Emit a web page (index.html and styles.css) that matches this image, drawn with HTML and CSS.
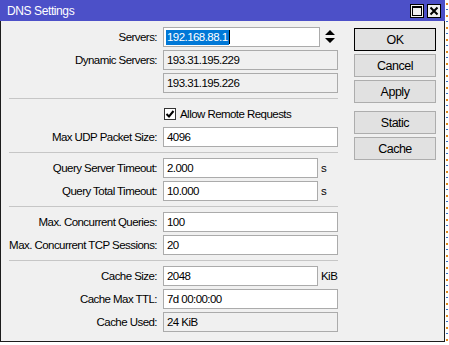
FILE: index.html
```html
<!DOCTYPE html>
<html lang="en">
<head>
<meta charset="UTF-8">
<meta name="viewport" content="width=device-width, initial-scale=1.0">
<title>DNS Settings</title>
<link rel="stylesheet" href="styles.css">
</head>
<body>

<div class="desk">
  <div class="window">
    <div class="titlebar">
      <span class="title">DNS Settings</span>
      <div class="title-buttons">
        <span class="tbtn">
          <svg width="12" height="12" viewBox="0 0 12 12"><rect x="1.5" y="1.5" width="9" height="9" fill="none" stroke="#000" stroke-width="1"/><rect x="1" y="1" width="10" height="2" fill="#000"/></svg>
        </span>
        <span class="tbtn">
          <svg width="12" height="12" viewBox="0 0 12 12"><path d="M2.5 2.5 L9.5 9.5 M9.5 2.5 L2.5 9.5" stroke="#000" stroke-width="2"/></svg>
        </span>
      </div>
    </div>

    <div class="content">
      <div class="form">
        <div class="section">
          <div class="row">
            <span class="label">Servers:</span>
            <div class="field servers"><span class="sel">192.168.88.1</span><span class="caret"></span></div>
            <span class="spin">
              <svg width="10" height="14" viewBox="0 0 10 14"><path d="M5 0 L10 5 L0 5 Z M0 8 L10 8 L5 13 Z" fill="#000"/></svg>
            </span>
          </div>
          <div class="row">
            <span class="label">Dynamic Servers:</span>
            <div class="field readonly">193.31.195.229</div>
          </div>
          <div class="row">
            <span class="label"></span>
            <div class="field readonly">193.31.195.226</div>
          </div>
        </div>
        <div class="sep"></div>

        <div class="section">
          <div class="row">
            <span class="label"></span>
            <span class="check">
              <svg width="10" height="10" viewBox="0 0 10 10"><path d="M1.5 5 L4 7.5 L8.5 2" fill="none" stroke="#000" stroke-width="2"/></svg>
            </span>
            <span class="check-text">Allow Remote Requests</span>
          </div>
          <div class="row">
            <span class="label">Max UDP Packet Size:</span>
            <div class="field">4096</div>
          </div>
        </div>
        <div class="sep"></div>

        <div class="section">
          <div class="row">
            <span class="label">Query Server Timeout:</span>
            <div class="field short">2.000</div>
            <span class="unit">s</span>
          </div>
          <div class="row">
            <span class="label">Query Total Timeout:</span>
            <div class="field short">10.000</div>
            <span class="unit">s</span>
          </div>
        </div>
        <div class="sep"></div>

        <div class="section">
          <div class="row">
            <span class="label">Max. Concurrent Queries:</span>
            <div class="field">100</div>
          </div>
          <div class="row">
            <span class="label">Max. Concurrent TCP Sessions:</span>
            <div class="field">20</div>
          </div>
        </div>
        <div class="sep"></div>

        <div class="section">
          <div class="row">
            <span class="label">Cache Size:</span>
            <div class="field short">2048</div>
            <span class="unit">KiB</span>
          </div>
          <div class="row">
            <span class="label">Cache Max TTL:</span>
            <div class="field">7d 00:00:00</div>
          </div>
          <div class="row">
            <span class="label">Cache Used:</span>
            <div class="field readonly">24 KiB</div>
          </div>
        </div>
      </div>

      <div class="buttons">
        <button class="btn default">OK</button>
        <button class="btn">Cancel</button>
        <button class="btn">Apply</button>
        <button class="btn spaced">Static</button>
        <button class="btn">Cache</button>
      </div>
    </div>
  </div>
  <div class="edge"></div>
</div>

</body>
</html>
```

FILE: styles.css
```css
body {
  margin: 0;
  background-color: #fff;
  font-family: "Liberation Sans", Arial, sans-serif;
  font-size: 11.5px;
  letter-spacing: -0.55px;
  color: #000;
}
.desk {
  display: flex;
}
.window {
  width: 445px;
  height: 342px;
  box-sizing: border-box;
  background-color: #f0f0f0;
  border: 1px solid #1c1c1c;
  border-top: none;
  display: flex;
  flex-direction: column;
}
.edge {
  width: 2px;
  height: 342px;
  margin-left: 1px;
  background: repeating-linear-gradient(to bottom, #fff 0, #fff 3px, #e08a20 3px, #e08a20 5px, #fff 5px, #fff 9px, #3a6fc0 9px, #3a6fc0 10px, #fff 10px, #fff 12px);
}
.titlebar {
  height: 21px;
  margin: 0 -1px;
  background-color: #4c50c8;
  display: flex;
  align-items: center;
  padding: 0 4px 0 7px;
}
.title {
  color: #fff;
  flex: 1;
  font-size: 12px;
  letter-spacing: -0.4px;
  padding-top: 1px;
}
.title-buttons {
  display: flex;
  gap: 3px;
}
.tbtn {
  width: 14px;
  height: 14px;
  box-sizing: border-box;
  border: 1px solid #000;
  background-color: #f0f0f0;
  display: flex;
  align-items: center;
  justify-content: center;
}
.content {
  display: flex;
  padding: 6px 8px 0 0;
}
.form {
  width: 337px;
}
.section {
  display: flex;
  flex-direction: column;
  gap: 3px;
}
.sep {
  height: 1px;
  margin: 5px 0 5px 8px;
  background-color: #c6c6c6;
}
.row {
  display: flex;
  align-items: center;
  height: 20px;
}
.label {
  width: 156px;
  text-align: right;
  margin-right: 6px;
  white-space: nowrap;
}
.field {
  width: 175px;
  height: 20px;
  box-sizing: border-box;
  border: 1px solid #ababab;
  background-color: #fff;
  padding: 0 3px;
  line-height: 18px;
  display: flex;
  align-items: center;
}
.field.readonly {
  background-color: #f0f0f0;
}
.field.short {
  width: 155px;
}
.field.servers {
  width: 157px;
  padding-left: 2px;
}
.sel {
  background-color: #0078d7;
  color: #fff;
  line-height: 15px;
  padding: 0 1px;
}
.caret {
  width: 1px;
  height: 14px;
  background-color: #000;
}
.spin {
  margin-left: 5px;
  display: flex;
}
.unit {
  margin-left: 3px;
}
.check {
  width: 12px;
  height: 12px;
  box-sizing: border-box;
  border: 1px solid #333;
  background-color: #fff;
  margin-left: 1px;
  display: flex;
  align-items: center;
  justify-content: center;
}
.check-text {
  margin-left: 4px;
}
.buttons {
  display: flex;
  flex-direction: column;
  gap: 3px;
  margin-left: 16px;
  margin-top: 1px;
}
.btn {
  width: 82px;
  height: 23px;
  border: 1px solid #adadad;
  background-color: #e1e1e1;
  font-family: inherit;
  font-size: 12.5px;
  letter-spacing: -0.5px;
  color: #000;
  padding: 0;
}
.btn.default {
  border-color: #000;
}
.btn.spaced {
  margin-top: 5px;
}
```
